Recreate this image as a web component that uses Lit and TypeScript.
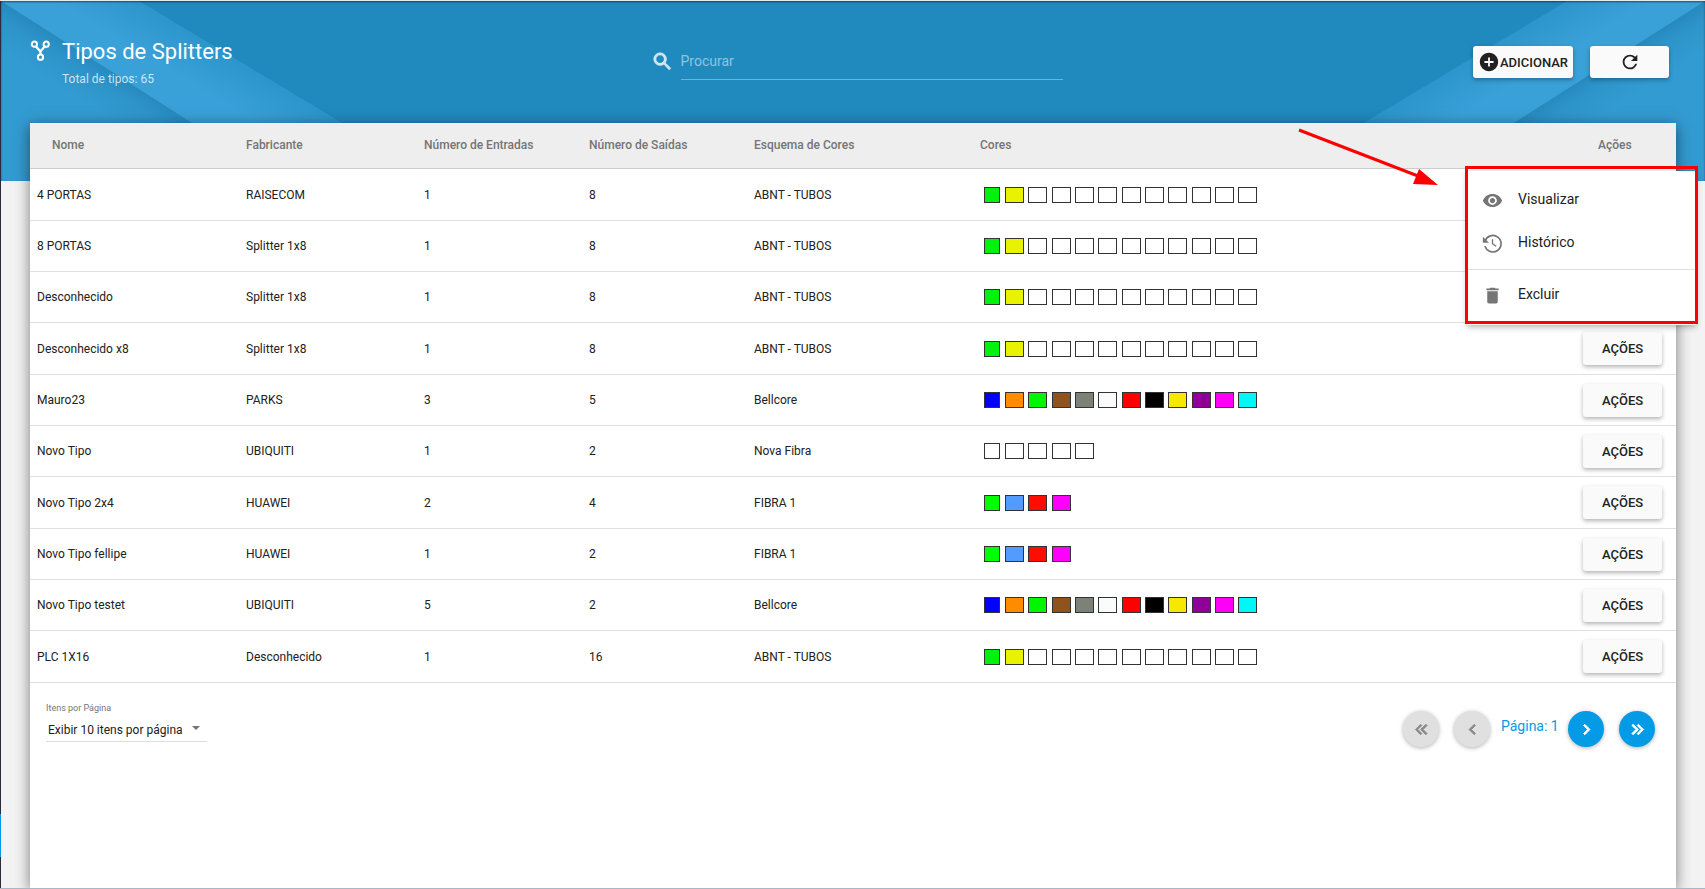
import { LitElement, html, css, svg } from "lit";
import { customElement, property } from "lit/decorators.js";
import { styleMap } from "lit/directives/style-map.js";

const ABNT = ["#00f20d", "#e9f200", ...Array(10).fill("#ffffff")];
const BELLCORE = [
  "#0000ff", "#ff8c00", "#00f500", "#90531c", "#7d8279", "#fafcfb",
  "#ff0000", "#000000", "#f7e800", "#900099", "#ff00f7", "#00f7f7",
];
const FIBRA = ["#00ff00", "#539cff", "#ff0d00", "#ff00ff"];
const NOVA = Array(5).fill("#ffffff");

interface Splitter {
  nome: string;
  fabricante: string;
  entradas: number;
  saidas: number;
  esquema: string;
  cores: string[];
}

const row = (
  nome: string, fabricante: string, entradas: number, saidas: number, esquema: string, cores: string[],
): Splitter => ({ nome, fabricante, entradas, saidas, esquema, cores });

const ROWS: Splitter[] = [
  row("4 PORTAS", "RAISECOM", 1, 8, "ABNT - TUBOS", ABNT),
  row("8 PORTAS", "Splitter 1x8", 1, 8, "ABNT - TUBOS", ABNT),
  row("Desconhecido", "Splitter 1x8", 1, 8, "ABNT - TUBOS", ABNT),
  row("Desconhecido x8", "Splitter 1x8", 1, 8, "ABNT - TUBOS", ABNT),
  row("Mauro23", "PARKS", 3, 5, "Bellcore", BELLCORE),
  row("Novo Tipo", "UBIQUITI", 1, 2, "Nova Fibra", NOVA),
  row("Novo Tipo 2x4", "HUAWEI", 2, 4, "FIBRA 1", FIBRA),
  row("Novo Tipo fellipe", "HUAWEI", 1, 2, "FIBRA 1", FIBRA),
  row("Novo Tipo testet", "UBIQUITI", 5, 2, "Bellcore", BELLCORE),
  row("PLC 1X16", "Desconhecido", 1, 16, "ABNT - TUBOS", ABNT),
];

const ICONS: Record<string, string> = {
  search: "M15.5 14h-.79l-.28-.27A6.471 6.471 0 0 0 16 9.5 6.5 6.5 0 1 0 9.5 16c1.61 0 3.09-.59 4.23-1.57l.27.28v.79l5 4.99L20.49 19l-4.99-5zm-6 0C7.01 14 5 11.99 5 9.5S7.01 5 9.5 5 14 7.01 14 9.5 11.99 14 9.5 14z",
  add: "M12 2C6.48 2 2 6.48 2 12s4.48 10 10 10 10-4.48 10-10S17.52 2 12 2zm5 11h-4v4h-2v-4H7v-2h4V7h2v4h4v2z",
  refresh: "M17.65 6.35A7.958 7.958 0 0 0 12 4a8 8 0 1 0 7.73 10h-2.08A5.99 5.99 0 0 1 12 18c-3.31 0-6-2.69-6-6s2.69-6 6-6c1.66 0 3.14.69 4.22 1.78L13 11h7V4l-2.35 2.35z",
  eye: "M12 4.5C7 4.5 2.73 7.61 1 12c1.73 4.39 6 7.5 11 7.5s9.27-3.11 11-7.5c-1.73-4.39-6-7.5-11-7.5zM12 17c-2.76 0-5-2.24-5-5s2.24-5 5-5 5 2.24 5 5-2.24 5-5 5zm0-8c-1.66 0-3 1.34-3 3s1.34 3 3 3 3-1.34 3-3-1.34-3-3-3z",
  trash: "M6 19c0 1.1.9 2 2 2h8c1.1 0 2-.9 2-2V7H6v12zM19 4h-3.5l-1-1h-5l-1 1H5v2h14V4z",
  first: "M18.41 7.41 17 6l-6 6 6 6 1.41-1.41L13.83 12zM12.41 7.41 11 6l-6 6 6 6 1.41-1.41L7.83 12z",
  prev: "M15.41 7.41 14 6l-6 6 6 6 1.41-1.41L10.83 12z",
  next: "M10 6 8.59 7.41 13.17 12l-4.58 4.59L10 18l6-6z",
  last: "M5.59 7.41 7 6l6 6-6 6-1.41-1.41L10.17 12zM11.59 7.41 13 6l6 6-6 6-1.41-1.41L16.17 12z",
};

@customElement("ui-icon")
export class UiIcon extends LitElement {
  @property() name = "";
  @property({ type: Number }) size = 24;

  static styles = css`
    :host { display: inline-flex; flex: none; }
    svg { display: block; fill: currentColor; }
    .line { fill: none; stroke: currentColor; }
    .heavy { stroke: currentColor; stroke-width: 1; }
  `;

  private shape() {
    if (this.name === "fork") {
      return svg`<g class="line" stroke-width="2.3">
        <circle cx="5" cy="4.8" r="3"/><circle cx="18.5" cy="4.8" r="3"/><circle cx="12" cy="19.6" r="3"/>
        <path d="M6.8 7.3 11.9 13V16.6M16.8 7.3 11.9 13" stroke-width="2.6"/></g>`;
    }
    if (this.name === "history") {
      return svg`<g class="line" stroke-width="1.9">
        <path d="M3.5 9.2A9.4 9.4 0 1 1 3.4 15"/><path d="M12 7v5.2l4.2 3" stroke-width="1.5"/></g>
        <path d="M1 4.2v7h7z"/>`;
    }
    const heavy = ["first", "prev", "next", "last", "search"].includes(this.name);
    return svg`<path class=${heavy ? "heavy" : ""} d=${ICONS[this.name] ?? ""}/>`;
  }

  render() {
    return html`<svg width=${this.size} height=${this.size} viewBox="0 0 24 24" aria-hidden="true">${this.shape()}</svg>`;
  }
}

@customElement("color-swatches")
export class ColorSwatches extends LitElement {
  @property({ attribute: false }) colors: string[] = [];

  static styles = css`
    :host { display: flex; }
    .swatch { box-sizing: border-box; width: 19px; height: 16px; margin-left: 4px; border: 1px solid #333; }
    .swatch:nth-child(3n + 1) { margin-left: 5px; }
    .swatch:first-child { width: 16px; margin-left: 4px; margin-right: 1px; }
  `;

  render() {
    return this.colors.map((c) => html`<span class="swatch" style=${styleMap({ background: c })}></span>`);
  }
}

@customElement("actions-menu")
export class ActionsMenu extends LitElement {
  static styles = css`
    :host { display: block; background: #fff; padding: 8px 0; box-shadow: 0 2px 6px rgba(0, 0, 0, 0.3); }
    .item {
      display: flex; align-items: center; gap: 15px; width: 100%; height: 43px; padding: 0 15px;
      border: 0; background: none; font: 400 14px Roboto, sans-serif; color: #212121; text-align: left;
    }
    ui-icon { color: #757575; }
    .label { padding-bottom: 4px; }
    hr { height: 1px; margin: 4px 0; border: 0; background: #e0e0e0; }
  `;

  render() {
    return html`
      <button class="item" role="menuitem"><ui-icon name="eye" size="21"></ui-icon><span class="label">Visualizar</span></button>
      <button class="item" role="menuitem"><ui-icon name="history" size="21"></ui-icon><span class="label">Histórico</span></button>
      <hr />
      <button class="item" role="menuitem"><ui-icon name="trash" size="21"></ui-icon><span class="label">Excluir</span></button>
    `;
  }
}

@customElement("app-root")
export class AppRoot extends LitElement {
  static styles = css`
    * { box-sizing: border-box; }
    :host {
      display: grid; grid-template-columns: 1px minmax(0, 1fr); grid-template-rows: 1px minmax(0, 1fr) 1px;
      height: 100vh; overflow: hidden; background: #f3f3f3; color: #212121;
      font: 400 12px/16px Roboto, sans-serif;
    }
    .edge { grid-column: 1 / -1; background: #e8eaec; }
    .edge.end { position: relative; background: #a9b7c4; }
    .rail { display: flex; flex-direction: column; background: #2b2b3c; }
    .rail .mark { height: 43px; margin-top: auto; margin-bottom: 31px; background: #039be5; }
    .page { position: relative; display: flex; flex-direction: column; padding: 0 29px; }
    .backdrop {
      position: absolute; inset: 0 0 auto 0; height: 180px; overflow: hidden;
      background: #2089be; display: flex; justify-content: space-between;
    }
    .backdrop::after { content: ""; position: absolute; inset: 0; box-shadow: inset 0 1px 2px rgba(0, 0, 0, 0.5); }
    .backdrop .flip { transform: scaleX(-1); }
    .top { position: relative; display: flex; align-items: flex-start; height: 122px; }
    .heading { display: flex; flex: 1; gap: 11px; color: #fff; padding-top: 38px; }
    .heading ui-icon { padding-top: 1px; }
    h1 { margin: 0; font-size: 22px; line-height: 25px; font-weight: 400; }
    .total { margin: 7px 0 0; color: rgba(255, 255, 255, 0.75); }
    .search {
      display: flex; align-items: center; gap: 7px; width: 412px; margin-left: 14px; padding-top: 42px;
      color: rgba(255, 255, 255, 0.75);
    }
    .search input {
      flex: 1; height: 37px; border: 0; border-bottom: 1px solid rgba(255, 255, 255, 0.35); outline: 0;
      background: none; padding: 0; color: #fff; font: 400 14px Roboto, sans-serif;
    }
    .search input::placeholder { color: rgba(255, 255, 255, 0.5); opacity: 1; }
    .tools { display: flex; flex: 1; justify-content: flex-end; gap: 17px; padding: 45px 7px 0 0; }
    .btn {
      display: inline-flex; align-items: center; justify-content: center; width: 79px; height: 33px; padding: 0;
      border: 0; border-radius: 3px; background: #fafafa; color: #212121;
      font: 500 13px Roboto, sans-serif; box-shadow: 0 2px 4px rgba(0, 0, 0, 0.3);
    }
    .tools .btn { height: 32px; }
    .btn.wide { width: 100px; }
    .card { position: relative; flex: 1; background: #fff; box-shadow: 0 3px 14px rgba(0, 0, 0, 0.5); }
    table { width: 100%; border-collapse: separate; border-spacing: 0; table-layout: fixed; }
    th, td { padding: 0; text-align: left; border-bottom: 1px solid #e0e0e0; }
    th { height: 46px; background: #eee; color: #757575; font-weight: 500; padding-bottom: 2px; border-color: #ccc; }
    td { height: 51px; }
    tbody tr:nth-child(3n + 1) td { height: 52px; }
    .c-name { width: 216px; }
    .c-maker { width: 178px; }
    .c-in { width: 165px; }
    .c-out { width: 165px; }
    .c-scheme { width: 226px; }
    .c-act { width: 94px; }
    td:first-child { padding-left: 7px; }
    th:first-child { padding-left: 22px; }
    th:last-child { padding-left: 16px; }
    td:last-child { padding-left: 1px; }
    .foot { display: flex; justify-content: space-between; align-items: flex-start; padding: 17px 21px 0 16px; }
    .size { display: flex; flex-direction: column; width: 161px; }
    .size label { font-size: 9px; line-height: 16px; color: #757575; }
    .pick { position: relative; }
    .pick select {
      width: 100%; height: 26px; appearance: none; border: 0; border-bottom: 1px solid #ddd; border-radius: 0;
      background: none; padding: 3px 2px 0; font: 400 12px Roboto, sans-serif; color: #212121;
    }
    .pick svg { position: absolute; right: 7px; top: 10px; pointer-events: none; }
    .pager { display: flex; gap: 15px; padding-top: 11px; }
    .pager .step {
      display: flex; align-items: center; justify-content: center; width: 36px; height: 36px; padding: 0;
      border: 0; border-radius: 50%; background: #039be5; color: #fff; box-shadow: 0 1px 4px rgba(0, 0, 0, 0.3);
    }
    .pager .step:disabled { background: #e0e0e0; color: #8a8a8a; }
    .pager .now { width: 56px; margin: 0 -4px; font-size: 14px; line-height: 30px; color: #039be5; white-space: nowrap; }
    .menu { position: absolute; top: 48px; right: -20px; width: 229px; }
    .frame { position: absolute; top: 43px; right: -22px; width: 233px; height: 158px; border: 3px solid #f00; }
    .arrow { position: absolute; top: 1px; right: 236px; }
  `;

  private facet(flip = false) {
    const id = flip ? "r" : "l";
    return html`<svg class=${flip ? "flip" : ""} width="440" height="180" viewBox="0 0 440 180" aria-hidden="true">
      <defs>
        <linearGradient id="band-${id}" gradientUnits="userSpaceOnUse" x1="238" y1="60" x2="215" y2="98">
          <stop offset="0" stop-color="#2c95cb"/><stop offset="1" stop-color="#39a1d7"/>
        </linearGradient>
        <linearGradient id="low-${id}" gradientUnits="userSpaceOnUse" x1="94" y1="60" x2="72" y2="95">
          <stop offset="0" stop-color="#278abf"/><stop offset="0.4" stop-color="#2e95ca"/><stop offset="1" stop-color="#329bd1"/>
        </linearGradient>
      </defs>
      <path d="M0 0H138L438 180H0z" fill="url(#band-${id})"/>
      <path d="M0 0 282 180H0z" fill="url(#low-${id})"/>
    </svg>`;
  }

  render() {
    return html`
      <div class="edge"></div>
      <div class="rail"><span class="mark"></span></div>
      <main class="page">
        <div class="backdrop">${this.facet()}${this.facet(true)}</div>
        <header class="top">
          <div class="heading">
            <ui-icon name="fork" size="21"></ui-icon>
            <div>
              <h1>Tipos de Splitters</h1>
              <p class="total">Total de tipos: 65</p>
            </div>
          </div>
          <div class="search">
            <ui-icon name="search" size="23"></ui-icon>
            <input type="text" aria-label="Procurar" placeholder="Procurar" />
          </div>
          <div class="tools">
            <button class="btn wide"><ui-icon name="add" size="22"></ui-icon>ADICIONAR</button>
            <button class="btn" aria-label="Atualizar"><ui-icon name="refresh" size="22"></ui-icon></button>
          </div>
        </header>
        <section class="card">
          <table>
            <colgroup>
              <col class="c-name" /><col class="c-maker" /><col class="c-in" /><col class="c-out" />
              <col class="c-scheme" /><col /><col class="c-act" />
            </colgroup>
            <thead>
              <tr>
                <th>Nome</th><th>Fabricante</th><th>Número de Entradas</th><th>Número de Saídas</th>
                <th>Esquema de Cores</th><th>Cores</th><th>Ações</th>
              </tr>
            </thead>
            <tbody>
              ${ROWS.map((r) => html`
                <tr>
                  <td>${r.nome}</td><td>${r.fabricante}</td><td>${r.entradas}</td><td>${r.saidas}</td>
                  <td>${r.esquema}</td>
                  <td><color-swatches .colors=${r.cores}></color-swatches></td>
                  <td><button class="btn">AÇÕES</button></td>
                </tr>`)}
            </tbody>
          </table>
          <div class="foot">
            <div class="size">
              <label for="size">Itens por Página</label>
              <div class="pick">
                <select id="size"><option>Exibir 10 itens por página</option></select>
                <svg width="8" height="4" viewBox="0 0 8 4" aria-hidden="true"><path d="M0 0h8L4 4z" fill="#757575"/></svg>
              </div>
            </div>
            <nav class="pager">
              <button class="step" disabled aria-label="Primeira"><ui-icon name="first" size="21"></ui-icon></button>
              <button class="step" disabled aria-label="Anterior"><ui-icon name="prev" size="21"></ui-icon></button>
              <span class="now">Página: 1</span>
              <button class="step" aria-label="Próxima"><ui-icon name="next" size="21"></ui-icon></button>
              <button class="step" aria-label="Última"><ui-icon name="last" size="21"></ui-icon></button>
            </nav>
          </div>
          <actions-menu class="menu" role="menu"></actions-menu>
          <div class="frame"></div>
          <svg class="arrow" width="146" height="66" viewBox="0 0 146 66" aria-hidden="true">
            <path d="M5 6 124 52" stroke="#f00" stroke-width="3"/>
            <path d="M125 45 144 61 119 60z" fill="#f00"/>
          </svg>
        </section>
      </main>
      <div class="edge end"></div>
    `;
  }
}
